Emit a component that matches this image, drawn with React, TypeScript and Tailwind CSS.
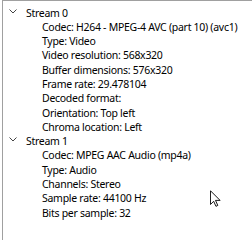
import React from 'react';

type Stream = { name: string; props: string[] };

const streams: Stream[] = [
  {
    name: 'Stream 0',
    props: [
      'Codec: H264 - MPEG-4 AVC (part 10) (avc1)',
      'Type: Video',
      'Video resolution: 568x320',
      'Buffer dimensions: 576x320',
      'Frame rate: 29.478104',
      'Decoded format:',
      'Orientation: Top left',
      'Chroma location: Left',
    ],
  },
  {
    name: 'Stream 1',
    props: [
      'Codec: MPEG AAC Audio (mp4a)',
      'Type: Audio',
      'Channels: Stereo',
      'Sample rate: 44100 Hz',
      'Bits per sample: 32',
    ],
  },
];

const Chevron: React.FC = () => (
  <svg width="8" height="5" viewBox="0 0 8 5" className="shrink-0 -mt-[3px]">
    <path d="M0.5 0.5 L4 4 L7.5 0.5" fill="none" stroke="#444" strokeWidth="1" />
  </svg>
);

const App: React.FC = () => {
  return (
    <div className="relative w-[252px] h-[240px] bg-white overflow-hidden">
      <div
        className="ml-[2px] h-full border-l border-t border-[#a0a0a0] pt-[4.5px] text-[10.5px] leading-[14.3px] tracking-[-0.28px] text-black"
        style={{ fontFamily: '"Noto Sans", "Open Sans", sans-serif' }}
      >
        {streams.map((s) => (
          <div key={s.name}>
            <div className="flex items-center h-[14.3px] pl-[6px] gap-[9px]">
              <Chevron />
              <span>{s.name}</span>
            </div>
            {s.props.map((p) => (
              <div key={p} className="h-[14.3px] pl-[39px] whitespace-nowrap">
                {p}
              </div>
            ))}
          </div>
        ))}
      </div>
      {/* mouse pointer */}
      <svg className="absolute left-[210px] top-[190px]" width="11" height="18" viewBox="0 0 12 19">
        <path
          d="M0.5 0.5 L0.5 15.5 L4 12 L6.5 17.5 L8.5 16.5 L6 11 L11 11 Z"
          fill="white"
          stroke="black"
          strokeWidth="1"
        />
      </svg>
    </div>
  );
};

export default App;
